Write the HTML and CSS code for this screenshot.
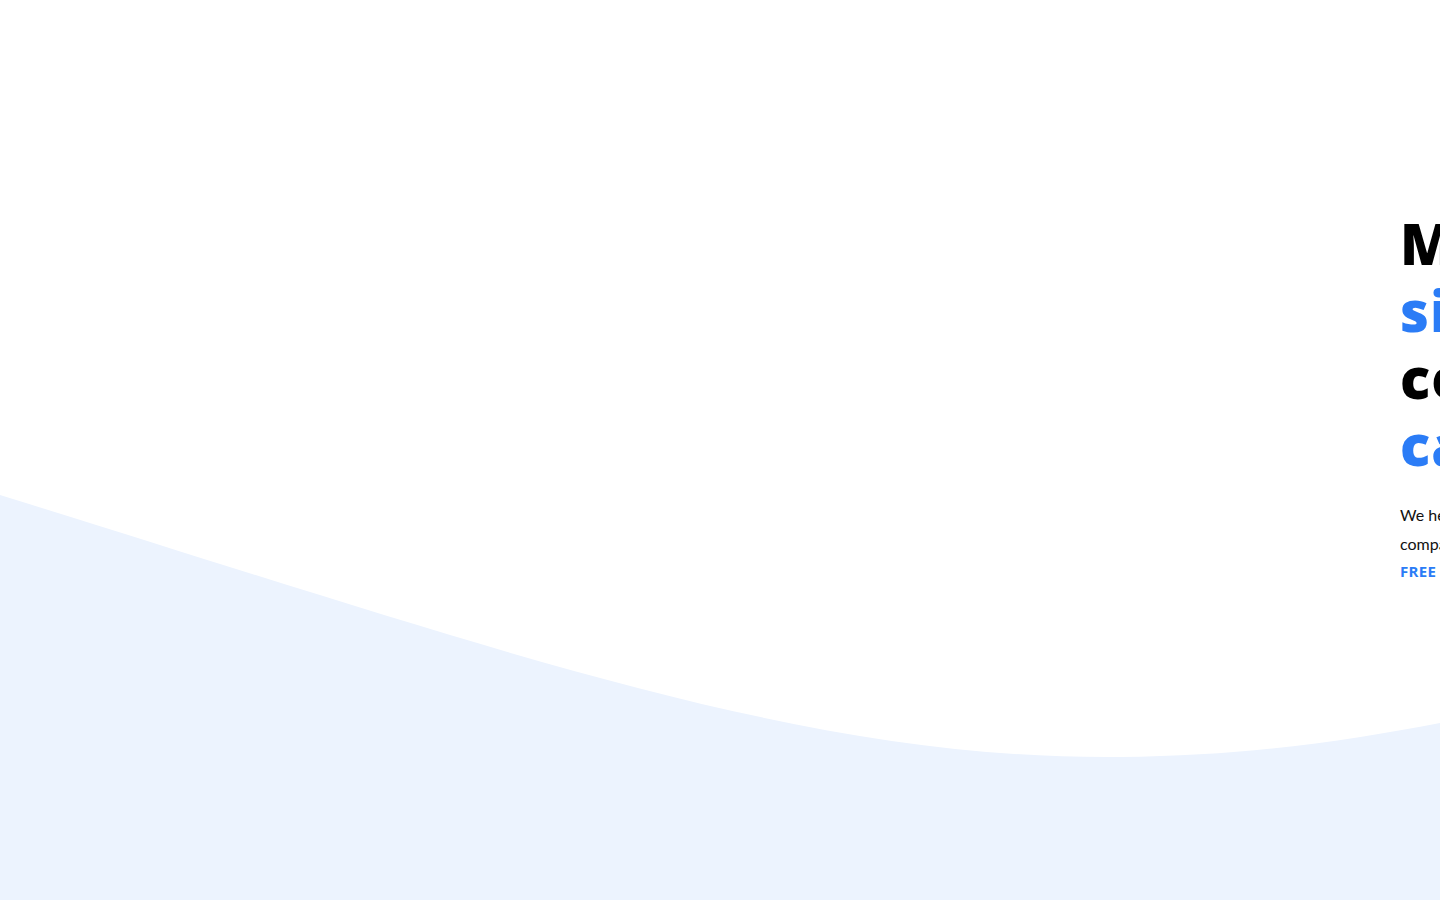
FILE: index.html
```html
<!DOCTYPE html>
<html lang="en">
<head>
<meta charset="utf-8">
<title>Hero</title>
<link rel="stylesheet" href="styles.css">
</head>
<body>
<section class="hero">
  <svg class="wave" viewBox="0 0 1440 900" preserveAspectRatio="none" aria-hidden="true">
    <path d="M0 495 C500 650 800 760 1120 757 C1250 756 1350 740 1440 723 L1440 900 L0 900 Z" fill="#ecf3fe"/>
  </svg>
  <div class="hero-inner">
    <div class="hero-media"></div>
    <div class="hero-text">
      <h1 class="title">
        <span class="dark">Make</span>
        <span class="blue">simple</span>
        <span class="dark">content</span>
        <span class="blue">campaigns</span>
      </h1>
      <p class="lead"><span class="line">We help businesses create simple and effective content campaigns for</span><span class="line">companies that want to grow faster than ever.</span></p>
      <a class="cta" href="#">FREE TRIAL</a>
    </div>
  </div>
</section>
</body>
</html>
```

FILE: styles.css
```css
html, body {
  margin: 0;
  padding: 0;
  overflow: hidden;
  background: #ffffff;
}
.hero {
  position: relative;
  height: 900px;
  overflow: hidden;
  font-family: "Open Sans", "Liberation Sans", sans-serif;
}
.wave {
  position: absolute;
  left: 0;
  top: 0;
  width: 1440px;
  height: 900px;
  z-index: 0;
}
.hero-inner {
  position: relative;
  z-index: 1;
  display: flex;
  padding-top: 210px;
}
.hero-media {
  flex: 0 0 1400px;
}
.hero-text {
  flex: 0 0 600px;
}
.title {
  margin: 0;
  font-size: 56px;
  line-height: 67px;
  font-weight: 800;
  letter-spacing: 1px;
}
.title span {
  display: block;
}
.dark { color: #000000; }
.blue { color: #2b7cf6; }
.lead {
  margin: 22px 0 0;
  font-family: "Lato", "Open Sans", sans-serif;
  font-size: 16px;
  line-height: 29px;
  color: #111111;
}
.lead .line {
  display: block;
  white-space: nowrap;
}
.cta {
  display: inline-block;
  margin-top: 3px;
  font-size: 15px;
  font-weight: 700;
  color: #2b7cf6;
  text-decoration: none;
  letter-spacing: 0.3px;
}
```
